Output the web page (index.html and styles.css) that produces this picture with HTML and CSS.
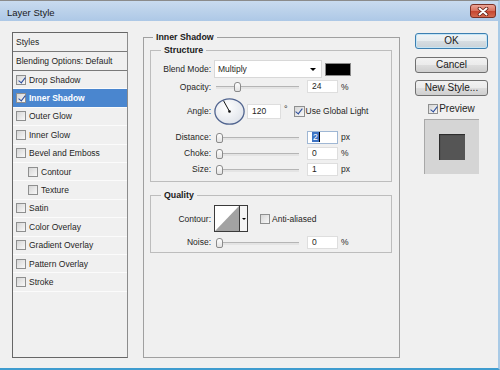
FILE: index.html
```html
<!DOCTYPE html>
<html lang="en">
<head>
    <meta charset="UTF-8">
    <meta name="viewport" content="width=device-width, initial-scale=1.0">
    <title>Layer Style</title>
    <link rel="stylesheet" href="styles.css">
</head>
<body>
    <div class="window">
        <div class="titlebar">
            <span class="title">Layer Style</span>
            <button class="close" type="button" aria-label="Close">
                <svg width="12" height="9" viewBox="0 0 12 9">
                    <path d="M2.5 1.5 L9.5 7.5 M9.5 1.5 L2.5 7.5" stroke="#5c1d14" stroke-width="3.6" stroke-linecap="round"/>
                    <path d="M2.5 1.5 L9.5 7.5 M9.5 1.5 L2.5 7.5" stroke="#fff" stroke-width="2" stroke-linecap="round"/>
                </svg>
            </button>
        </div>
        <div class="content">
            <div class="styles-list">
                <div class="list-head">Styles</div>
                <div class="list-head">Blending Options: Default</div>
                <div class="list-item"><span class="check on"></span>Drop Shadow</div>
                <div class="list-item selected"><span class="check on"></span>Inner Shadow</div>
                <div class="list-item"><span class="check"></span>Outer Glow</div>
                <div class="list-item"><span class="check"></span>Inner Glow</div>
                <div class="list-item"><span class="check"></span>Bevel and Emboss</div>
                <div class="list-item indent"><span class="check"></span>Contour</div>
                <div class="list-item indent"><span class="check"></span>Texture</div>
                <div class="list-item"><span class="check"></span>Satin</div>
                <div class="list-item"><span class="check"></span>Color Overlay</div>
                <div class="list-item"><span class="check"></span>Gradient Overlay</div>
                <div class="list-item"><span class="check"></span>Pattern Overlay</div>
                <div class="list-item"><span class="check"></span>Stroke</div>
            </div>

            <fieldset class="group main-group">
                <legend>Inner Shadow</legend>

                <fieldset class="group sub-group structure">
                    <legend>Structure</legend>
                    <div class="row row-blend">
                        <label>Blend Mode:</label>
                        <div class="ctrl">
                            <div class="select"><span>Multiply</span><span class="select-arrow"></span></div>
                            <span class="swatch"></span>
                        </div>
                    </div>
                    <div class="row row-opacity">
                        <label>Opacity:</label>
                        <div class="ctrl">
                            <div class="slider"><div class="rail"><span class="thumb" style="--pos: 24%"></span></div></div>
                            <span class="field">24</span>
                            <span class="unit">%</span>
                        </div>
                    </div>
                    <div class="row row-angle">
                        <label>Angle:</label>
                        <div class="ctrl">
                            <svg class="dial" width="31" height="27" viewBox="0 0 31 27">
                                <defs>
                                    <radialGradient id="dialFill" cx="40%" cy="35%" r="70%">
                                        <stop offset="0" stop-color="#ffffff"/>
                                        <stop offset="1" stop-color="#dfe3ea"/>
                                    </radialGradient>
                                </defs>
                                <ellipse cx="15.5" cy="13.5" rx="14.6" ry="12.7" fill="url(#dialFill)" stroke="#50648f" stroke-width="1.3"/>
                                <line x1="15.5" y1="13.5" x2="9.6" y2="2.8" stroke="#111" stroke-width="1"/>
                                <circle cx="15.5" cy="13.5" r="1.3" fill="#111"/>
                            </svg>
                            <span class="field field-angle">120</span>
                            <span class="deg">°</span>
                            <span class="check-label global"><span class="check on"></span>Use Global Light</span>
                        </div>
                    </div>
                    <div class="row row-distance">
                        <label>Distance:</label>
                        <div class="ctrl">
                            <div class="slider"><div class="rail"><span class="thumb" style="--pos: 0%"></span></div></div>
                            <span class="field field-active"><span class="selection">2</span></span>
                            <span class="unit">px</span>
                        </div>
                    </div>
                    <div class="row">
                        <label>Choke:</label>
                        <div class="ctrl">
                            <div class="slider"><div class="rail"><span class="thumb" style="--pos: 0%"></span></div></div>
                            <span class="field">0</span>
                            <span class="unit">%</span>
                        </div>
                    </div>
                    <div class="row">
                        <label>Size:</label>
                        <div class="ctrl">
                            <div class="slider"><div class="rail"><span class="thumb" style="--pos: 0%"></span></div></div>
                            <span class="field">1</span>
                            <span class="unit">px</span>
                        </div>
                    </div>
                </fieldset>

                <fieldset class="group sub-group quality">
                    <legend>Quality</legend>
                    <div class="row row-contour">
                        <label>Contour:</label>
                        <div class="ctrl">
                            <div class="contour">
                                <svg class="contour-curve" width="24" height="25" viewBox="0 0 24 25">
                                    <polygon points="0,25 24,0 24,25" fill="#a2a2a2"/>
                                </svg>
                                <span class="contour-drop"></span>
                            </div>
                            <span class="check-label anti"><span class="check"></span>Anti-aliased</span>
                        </div>
                    </div>
                    <div class="row row-noise">
                        <label>Noise:</label>
                        <div class="ctrl">
                            <div class="slider"><div class="rail"><span class="thumb" style="--pos: 0%"></span></div></div>
                            <span class="field">0</span>
                            <span class="unit">%</span>
                        </div>
                    </div>
                </fieldset>
            </fieldset>

            <div class="actions">
                <button class="btn btn-default" type="button">OK</button>
                <button class="btn" type="button">Cancel</button>
                <button class="btn" type="button">New Style...</button>
                <span class="check-label preview-toggle"><span class="check on"></span>Preview</span>
                <div class="preview"><span class="preview-swatch"></span></div>
            </div>
        </div>
    </div>
</body>
</html>
```

FILE: styles.css
```css
* {
    box-sizing: border-box;
}
body {
    margin: 0;
    font-family: 'Liberation Sans', Arial, sans-serif;
    font-size: 8.5px;
    color: #1f1f24;
}
.window {
    width: 500px;
    height: 370px;
    display: flex;
    flex-direction: column;
    background-color: #f0f0f0;
    border-top: 1px solid #8b8b8b;
    border-right: 2px solid #a9cae6;
    border-bottom: 2px solid #3f9ccf;
}
.titlebar {
    height: 20px;
    display: flex;
    align-items: center;
    justify-content: space-between;
    padding: 0 2px 0 7px;
    background: linear-gradient(#c9dbef, #adc8e6);
}
.title {
    font-size: 9.5px;
    color: #1a1a1a;
    padding-top: 2px;
}
.close {
    width: 26px;
    height: 14px;
    padding: 0;
    display: flex;
    align-items: center;
    justify-content: center;
    border: 1px solid #7a3025;
    border-radius: 3px;
    background: linear-gradient(#eba597, #d9725f 48%, #c54630 52%, #d46a4f);
}
.content {
    flex: 1;
    display: flex;
    gap: 15px;
    padding: 11px 10px 10px 12px;
}

/* styles list */
.styles-list {
    width: 116px;
    flex: none;
    border: 1px solid #666;
    border-right-color: #8c8c8c;
}
.list-head {
    height: 19px;
    line-height: 18px;
    padding-left: 3px;
    border-bottom: 1px solid #7a7a7a;
}
.list-item {
    height: 18.4px;
    display: flex;
    align-items: center;
    gap: 3px;
    padding-left: 3px;
    border-bottom: 1px solid #fbfbfb;
}
.list-item.indent {
    padding-left: 15px;
}
.list-item.selected {
    background-color: #4a86cf;
    color: #fff;
    font-weight: bold;
}

/* checkboxes */
.check {
    position: relative;
    flex: none;
    width: 10px;
    height: 10px;
    border: 1px solid #8e8f8f;
    background: linear-gradient(135deg, #d6d6d6, #f8f8f8);
}
.check.on::after {
    content: "";
    position: absolute;
    left: 2.5px;
    top: 0;
    width: 3px;
    height: 6px;
    border: solid #2a4c9c;
    border-width: 0 1.6px 1.6px 0;
    transform: rotate(38deg);
}
.check-label {
    display: flex;
    align-items: center;
    gap: 1px;
}

/* group boxes */
.group {
    margin: 0;
    min-width: 0;
    border: 1px solid #bdbdbd;
}
.group > legend {
    font-size: 8.8px;
    font-weight: bold;
    line-height: 12px;
    padding: 0 3px;
    color: #1a1a1a;
}
.main-group {
    width: 257px;
    flex: none;
    margin-top: -1px;
    padding: 0 7px 0 6px;
    border-color: #a0a0a0;
}
.main-group > legend {
    margin-left: 3px;
}
.sub-group > legend {
    margin-left: 10px;
}
.structure {
    margin-top: 1px;
    padding: 4px 0;
}
.quality {
    margin-top: 7px;
    padding: 4px 0 2px;
}

/* rows */
.row {
    display: grid;
    grid-template-columns: 60px auto;
    column-gap: 3px;
    align-items: center;
    height: 16px;
}
.row > label {
    text-align: right;
}
.ctrl {
    display: flex;
    align-items: center;
}
.row-blend {
    height: 18px;
}
.row-opacity {
    height: 15px;
    margin-top: 1px;
}
.row-angle {
    height: 28px;
    margin-top: 3px;
}
.row-distance {
    margin-top: 4px;
}
.row-contour {
    height: 27px;
}
.row-noise {
    margin-top: 2px;
}

.select {
    width: 108px;
    height: 18px;
    display: flex;
    align-items: center;
    justify-content: space-between;
    padding: 0 5px 0 3px;
    background-color: #fff;
    border: 1px solid #d8d8d8;
}
.select-arrow {
    width: 0;
    height: 0;
    border-left: 3px solid transparent;
    border-right: 3px solid transparent;
    border-top: 3px solid #000;
}
.swatch {
    width: 26px;
    height: 13px;
    margin-left: 3px;
    background-color: #000;
    border: 1px solid #8a8a8a;
}

.slider {
    position: relative;
    width: 88px;
    height: 11px;
    padding: 0 4px 0 5px;
}
.slider::before {
    content: "";
    position: absolute;
    left: 2px;
    right: 3px;
    top: 5px;
    height: 2px;
    border-top: 1px solid #b5b5b5;
    background-color: #e4e4e4;
}
.rail {
    position: relative;
    height: 100%;
}
.thumb {
    position: absolute;
    left: var(--pos);
    top: 1px;
    width: 7px;
    height: 10px;
    margin-left: -3.5px;
    border: 1px solid #8a8a8a;
    border-radius: 3px 3px 2px 2px;
    background: linear-gradient(#ffffff, #e2e2e2);
}

.field {
    width: 31px;
    height: 13px;
    margin-left: 5px;
    padding-left: 4px;
    line-height: 11px;
    background-color: #fff;
    border: 1px solid #dedede;
}
.field-angle {
    width: 34px;
    height: 15px;
    line-height: 13px;
    margin-left: 2px;
}
.field-active {
    border-color: #9fb7d4;
}
.selection {
    display: inline-block;
    padding: 0 1px;
    line-height: 10px;
    background-color: #3d73c4;
    color: #fff;
    border-right: 1px solid #000;
}
.unit {
    margin-left: 3px;
}
.deg {
    align-self: flex-start;
    margin: 6px 0 0 3px;
    font-size: 9px;
}
.global {
    margin-left: 6px;
}
.global .check {
    width: 11px;
    height: 11px;
}

.contour {
    display: flex;
    width: 34px;
    height: 27px;
    background-color: #fff;
    border: 1px solid #3a3a3a;
}
.contour-drop {
    flex: 1;
    display: flex;
    align-items: center;
    justify-content: center;
    border-left: 1px solid #3a3a3a;
    background-color: #f4f4f4;
}
.contour-drop::after {
    content: "";
    border-left: 2px solid transparent;
    border-right: 2px solid transparent;
    border-top: 2px solid #000;
}
.anti {
    margin-left: 12px;
    gap: 2px;
}

/* right column */
.actions {
    width: 73px;
    flex: none;
    display: flex;
    flex-direction: column;
    align-items: center;
    padding-top: 1px;
}
.btn {
    width: 73px;
    height: 16px;
    padding: 0;
    font-family: 'Liberation Sans', Arial, sans-serif;
    font-size: 10px;
    line-height: 14px;
    color: #1a1a1a;
    border: 1px solid #707070;
    border-radius: 3px;
    background: linear-gradient(#f2f2f2, #ebebeb 49%, #dddddd 51%, #cfcfcf);
}
.btn + .btn {
    margin-top: 7.5px;
}
.btn-default {
    border-color: #3c7fb1;
    box-shadow: inset 0 0 0 1px #c4e5f6;
    background: linear-gradient(#f0f4f7, #e6ecef 49%, #d6dde2 51%, #c9d2d8);
}
.preview-toggle {
    margin-top: 7px;
    font-size: 10px;
}
.preview {
    width: 55px;
    height: 55px;
    margin-top: 5px;
    display: flex;
    align-items: center;
    justify-content: center;
    background-color: #d5d5d5;
    border-top: 1px solid #a8a8a8;
    border-left: 1px solid #a8a8a8;
}
.preview-swatch {
    width: 26px;
    height: 26px;
    background-color: #555;
    box-shadow: inset 1px 1px 1px #2a2a2a;
}
```
